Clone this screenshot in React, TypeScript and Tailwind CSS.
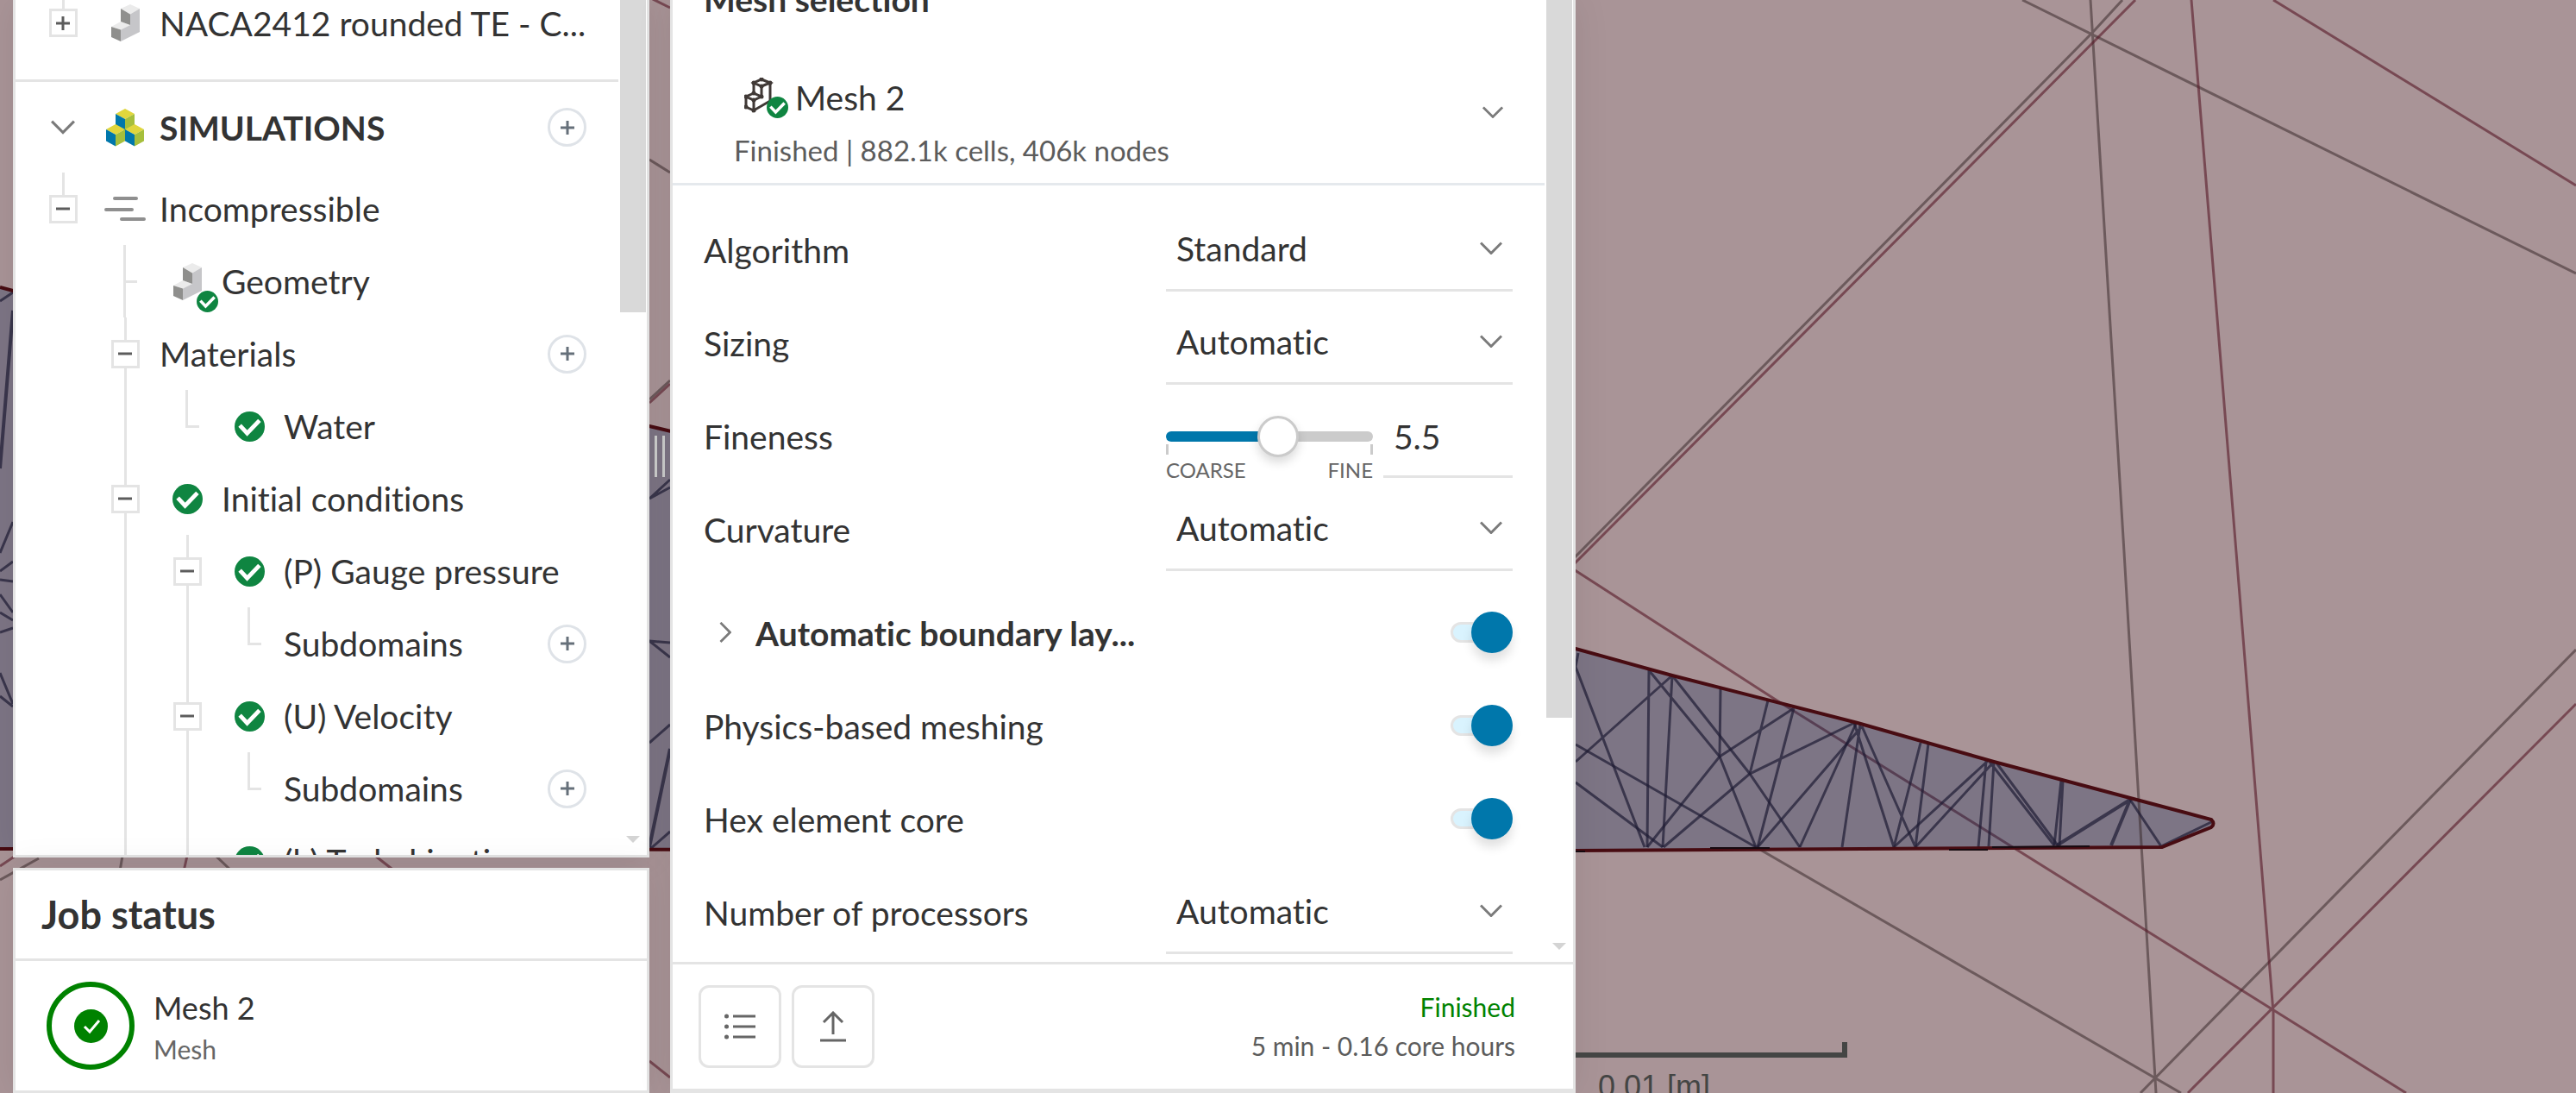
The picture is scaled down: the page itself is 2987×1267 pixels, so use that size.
import React from "react";
import clsx from "clsx";

type Guide = "blank" | "line" | "tee" | "elbow" | "first" | "node";

interface TreeItem {
  label: string;
  guides: Guide[];
  icon?: "flow" | "geometry" | "check";
  addable?: boolean;
}

const treeItems: TreeItem[] = [
  { label: "Incompressible", guides: ["first"], icon: "flow" },
  { label: "Geometry", guides: ["blank", "tee"], icon: "geometry" },
  { label: "Materials", guides: ["blank", "node"], addable: true },
  { label: "Water", guides: ["blank", "line", "elbow"], icon: "check" },
  { label: "Initial conditions", guides: ["blank", "node"], icon: "check" },
  {
    label: "(P) Gauge pressure",
    guides: ["blank", "line", "node"],
    icon: "check",
  },
  {
    label: "Subdomains",
    guides: ["blank", "line", "line", "elbow"],
    addable: true,
  },
  { label: "(U) Velocity", guides: ["blank", "line", "node"], icon: "check" },
  {
    label: "Subdomains",
    guides: ["blank", "line", "line", "elbow"],
    addable: true,
  },
  {
    label: "(k) Turb. kinetic energy",
    guides: ["blank", "line", "line"],
    icon: "check",
  },
];

const Chevron: React.FC<{ className?: string }> = ({ className }) => (
  <svg
    viewBox="0 0 26 15"
    className={className}
    fill="none"
    stroke="#7b7b7b"
    strokeWidth="3"
  >
    <path d="M1 1.5l12 12 12-12" />
  </svg>
);

const CheckBadge: React.FC<{ className?: string }> = ({ className }) => (
  <svg viewBox="0 0 36 36" className={className}>
    <circle cx="18" cy="18" r="18" fill="#0f8541" />
    <path
      d="M8 18.500l7 7.500 13-13.500"
      fill="none"
      stroke="#fff"
      strokeWidth="5"
      strokeLinecap="square"
    />
  </svg>
);

const GeometryIcon: React.FC = () => (
  <svg viewBox="0 0 33 43" className="h-[43px] w-[33px]">
    <path d="M22 0l11 5-11 6.500L11 5z" fill="#ebebeb" />
    <path d="M11 20l11 4-11 5.500L0 26z" fill="#ebebeb" />
    <path d="M11 5l11 6.500V24l-11-4z" fill="#8f8f8d" />
    <path d="M0 26l11 3.500V43L0 38z" fill="#8f8f8d" />
    <path d="M22 11.500L33 5v27L11 43V29.500L22 24z" fill="#c6c6c9" />
  </svg>
);

const cubes = [
  [22, 0],
  [11, 18],
  [33, 18],
];

const SimulationsIcon: React.FC = () => (
  <svg viewBox="0 0 44 44" className="h-11 w-11">
    {cubes.map(([x, y]) => (
      <g key={`${x}-${y}`}>
        <path
          d={`M${x} ${y}l11 6-11 6-11-6z`}
          fill="#e0d63d"
        />
        <path d={`M${x - 11} ${y + 6}l11 6v13.500l-11-6z`} fill="#0077ab" />
        <path d={`M${x + 11} ${y + 6}l-11 6v13.500l11-6z`} fill="#a6bf3c" />
      </g>
    ))}
  </svg>
);

const FlowIcon: React.FC = () => (
  <svg
    viewBox="0 0 48 30"
    className="h-[30px] w-12"
    stroke="#8f8f8f"
    strokeWidth="4"
    strokeLinecap="round"
  >
    <path d="M12 3h25M2 16h30M20 27h26" />
  </svg>
);

const meshJoints = [
  [20, 2],
  [11, 6],
  [30, 6],
  [20, 10],
  [11, 18],
  [2, 22],
  [20, 22],
  [11, 26],
  [2, 34],
  [11, 38],
];

const MeshIcon: React.FC = () => (
  <div className="relative h-[47px] w-[51px]">
    <svg viewBox="0 0 51 47" className="h-[47px] w-[51px]">
      <path
        d="M20 2l10 4-10 4-9-4zM11 6v12l9 4V10M30 6v21L11 38V26M11 18l-9 4 9 4 9-4M2 22v12l9 4"
        fill="none"
        stroke="#403936"
        strokeWidth="3"
      />
      {meshJoints.map(([x, y]) => (
        <circle key={`${x}-${y}`} cx={x} cy={y} r="2.500" fill="#403936" />
      ))}
    </svg>
    <CheckBadge className="absolute right-0 bottom-0 size-[25px]" />
  </div>
);

const ExpandBox: React.FC<{ open?: boolean }> = ({ open }) => (
  <button
    aria-label={open ? "Collapse" : "Expand"}
    className="flex size-[33px] shrink-0 items-center justify-center border-[3px] border-[#e4e4e4] bg-white"
  >
    <svg viewBox="0 0 16 16" className="size-4" stroke="#5c5c5c" strokeWidth="3">
      <path d={open ? "M0 8h16" : "M0 8h16M8 0v16"} />
    </svg>
  </button>
);

const AddButton: React.FC<{ label: string }> = ({ label }) => (
  <button
    aria-label={`Add to ${label}`}
    className="mr-[37px] flex size-[45px] shrink-0 items-center justify-center rounded-full border-[3px] border-[#dfe3e8]"
  >
    <svg viewBox="0 0 16 16" className="size-4" stroke="#66707a" strokeWidth="3">
      <path d="M0 8h16M8 0v16" />
    </svg>
  </button>
);

const GuideCell: React.FC<{ kind: Guide }> = ({ kind }) => {
  if (kind === "tee" || kind === "elbow") {
    return (
      <div className="flex w-[72px] shrink-0 flex-col self-stretch pl-[34px]">
        <div className="w-4 flex-1 border-b-[3px] border-l-[3px] border-[#e4e4e4]" />
        <div
          className={clsx(
            "w-4 flex-1 border-[#e4e4e4]",
            kind === "tee" && "border-l-[3px]",
          )}
        />
      </div>
    );
  }
  return (
    <div className="flex w-[72px] shrink-0 flex-col items-center self-stretch">
      <div
        className={clsx("w-[3px] flex-1", kind !== "blank" && "bg-[#e4e4e4]")}
      />
      {(kind === "first" || kind === "node") && (
        <ExpandBox open />
      )}
      <div
        className={clsx(
          "w-[3px] flex-1",
          (kind === "line" || kind === "node") && "bg-[#e4e4e4]",
        )}
      />
    </div>
  );
};

const TreeIcon: React.FC<{ icon: TreeItem["icon"] }> = ({ icon }) => (
  <div className="flex w-[72px] shrink-0 items-center justify-center">
    {icon === "flow" && <FlowIcon />}
    {icon === "check" && <CheckBadge className="size-[35px]" />}
    {icon === "geometry" && (
      <div className="relative">
        <GeometryIcon />
        <CheckBadge className="absolute -right-[19px] -bottom-[14px] size-[25px]" />
      </div>
    )}
  </div>
);

const Scrollbar: React.FC<{ thumb: string }> = ({ thumb }) => (
  <div className="flex w-[33px] shrink-0 flex-col items-center justify-between pb-3.5">
    <div className={clsx("w-[30px] bg-[#d9d9d9]", thumb)} />
    <svg viewBox="0 0 16 8" className="h-2 w-4" fill="#d4d4d4">
      <path d="M0 0h16L8 8z" />
    </svg>
  </div>
);

const TreePanel: React.FC = () => (
  <nav className="flex min-h-0 flex-1 overflow-hidden border-[3px] border-t-0 border-[#e4e4e4] bg-white shadow-[0_0_40px_rgba(0,0,0,0.08)]">
    <div className="min-w-0 flex-1">
      <div className="h-[95px] border-b-[3px] border-[#e4e4e4] pl-[19px]">
        <div className="flex h-[53px] items-center">
          <div className="flex w-[72px] shrink-0 flex-col items-center self-stretch">
            <div className="w-[3px] flex-1 bg-[#e4e4e4]" />
            <ExpandBox />
            <div className="flex-1" />
          </div>
          <div className="flex w-[72px] shrink-0 justify-center">
            <GeometryIcon />
          </div>
          <span className="ml-1 whitespace-nowrap">
            NACA2412 rounded TE - C...
          </span>
        </div>
      </div>
      <div className="flex h-[105px] items-center pl-[19px]">
        <button
          aria-label="Collapse simulations"
          className="flex w-[72px] shrink-0 justify-center"
        >
          <Chevron className="w-7" />
        </button>
        <div className="flex w-[72px] shrink-0 justify-center">
          <SimulationsIcon />
        </div>
        <h2 className="ml-1 flex-1 font-bold">SIMULATIONS</h2>
        <AddButton label="Simulations" />
      </div>
      <ul>
        {treeItems.map((item, i) => (
          <li key={i} className="flex h-[84px] items-center pl-[19px]">
            {item.guides.map((kind, g) => (
              <GuideCell key={g} kind={kind} />
            ))}
            {item.icon && <TreeIcon icon={item.icon} />}
            <span className="ml-1 flex-1 whitespace-nowrap">
              {item.label}
            </span>
            {item.addable && <AddButton label={item.label} />}
          </li>
        ))}
      </ul>
    </div>
    <Scrollbar thumb="h-[362px]" />
  </nav>
);

const JobStatus: React.FC = () => (
  <section className="border-[3px] border-[#e4e4e4] bg-white shadow-[0_0_40px_rgba(0,0,0,0.08)]">
    <h2 className="flex h-[105px] items-center border-b-[3px] border-[#e4e4e4] px-[30px] text-[45px] font-bold">
      Job status
    </h2>
    <div className="flex h-[150px] items-center gap-[22px] pl-9">
      <div className="flex size-[102px] items-center justify-center rounded-full border-[6px] border-[#008200]">
        <svg viewBox="0 0 39 39" className="size-[39px]">
          <circle cx="19.500" cy="19.500" r="19.500" fill="#008200" />
          <path
            d="M12 20l6 6 11-13"
            fill="none"
            stroke="#fff"
            strokeWidth="3"
          />
        </svg>
      </div>
      <div className="pt-1.5 leading-[48px]">
        <p className="text-[36px]">Mesh 2</p>
        <p className="text-[30px] text-[#666]">Mesh</p>
      </div>
    </div>
  </section>
);

const FieldRow: React.FC<{
  id: string;
  label: string;
  children: React.ReactNode;
}> = ({ id, label, children }) => (
  <div className="flex h-[108px] items-end pr-[37px] pl-9">
    <label htmlFor={id} className="flex h-[98px] flex-1 items-center pt-0.5">
      {label}
    </label>
    {children}
  </div>
);

const SelectField: React.FC<{ id: string; label: string; value: string }> = ({
  id,
  label,
  value,
}) => (
  <FieldRow id={id} label={label}>
    <div className="relative w-[402px]">
      <select
        id={id}
        className="h-[98px] w-full appearance-none border-b-[3px] border-[#e4e4e4] bg-transparent px-3 outline-none"
      >
        <option>{value}</option>
      </select>
      <Chevron className="pointer-events-none absolute top-10 right-3 w-[26px]" />
    </div>
  </FieldRow>
);

const Toggle: React.FC<{ id: string }> = ({ id }) => (
  <div className="flex h-[98px] items-center">
    <input
      id={id}
      type="checkbox"
      role="switch"
      defaultChecked
      className="flex h-6 w-[72px] appearance-none items-center rounded-full border-[3px] border-[#e4e4e4] bg-[#d9f3fe] before:size-12 before:shrink-0 before:rounded-full before:bg-[#0077ab] before:shadow-[0_9px_12px_rgba(0,0,0,0.12)] checked:before:-mr-[3px] checked:before:ml-auto"
    />
  </div>
);

const MeshPanel: React.FC = () => (
  <section className="flex h-screen min-w-0 flex-col border-x-[3px] border-b-[5px] border-[#e4e4e4] bg-white shadow-[0_0_40px_rgba(0,0,0,0.08)]">
    <div className="flex min-h-0 flex-1 overflow-hidden">
      <div className="min-w-0 flex-1">
        <div className="-mt-[25px] border-b-[3px] border-[#e5e9ed] pb-3.5">
          <h2 className="pl-9 leading-[48px] font-bold">Mesh selection</h2>
          <button className="mt-[60px] flex w-full items-start justify-between pr-12 pl-[71px] text-left">
            <span>
              <span className="flex h-[60px] items-center gap-2 pl-3">
                <MeshIcon />
                Mesh 2
              </span>
              <span className="mt-[7px] block text-[33px] leading-[48px] text-[#5c5c5c]">
                Finished | 882.1k cells, 406k nodes
              </span>
            </span>
            <Chevron className="mt-10 w-6" />
          </button>
        </div>
        <form className="pt-[15px]">
          <SelectField id="algorithm" label="Algorithm" value="Standard" />
          <SelectField id="sizing" label="Sizing" value="Automatic" />
          <FieldRow id="fineness" label="Fineness">
            <div className="flex w-[402px] gap-3">
              <div className="h-[98px] w-60 pt-[26px] text-[24px] leading-6 text-[#666]">
                <input
                  id="fineness"
                  type="range"
                  min="0"
                  max="10"
                  step="0.5"
                  defaultValue="5.5"
                  className="block h-12 w-full appearance-none bg-transparent [&::-webkit-slider-runnable-track]:h-3 [&::-webkit-slider-runnable-track]:rounded-full [&::-webkit-slider-runnable-track]:bg-[linear-gradient(to_right,#0077ab_55%,#cbcbcb_55%)] [&::-webkit-slider-thumb]:-mt-[18px] [&::-webkit-slider-thumb]:size-12 [&::-webkit-slider-thumb]:appearance-none [&::-webkit-slider-thumb]:rounded-full [&::-webkit-slider-thumb]:border-[3px] [&::-webkit-slider-thumb]:border-[#cbcbcb] [&::-webkit-slider-thumb]:bg-white [&::-webkit-slider-thumb]:shadow-[0_6px_12px_rgba(0,0,0,0.15)]"
                />
                <div className="-mt-[15px] h-3 border-x-[3px] border-[#cbcbcb]" />
                <div className="mt-1.5 flex justify-between">
                  <span>COARSE</span>
                  <span>FINE</span>
                </div>
              </div>
              <input
                type="text"
                aria-label="Fineness value"
                defaultValue="5.5"
                className="h-[98px] w-[150px] border-b-[3px] border-[#e4e4e4] bg-transparent px-3 pt-1 outline-none"
              />
            </div>
          </FieldRow>
          <SelectField id="curvature" label="Curvature" value="Automatic" />
          <div className="mt-3 flex h-[108px] items-end pr-[37px] pl-12">
            <button
              type="button"
              aria-label="Expand boundary layers"
              className="flex h-[98px] w-[26px] items-center justify-center"
            >
              <Chevron className="w-6 shrink-0 -rotate-90" />
            </button>
            <label
              htmlFor="layers"
              className="ml-[22px] flex h-[98px] flex-1 items-center pt-0.5 font-bold"
            >
              Automatic boundary lay...
            </label>
            <Toggle id="layers" />
          </div>
          <FieldRow id="physics" label="Physics-based meshing">
            <Toggle id="physics" />
          </FieldRow>
          <FieldRow id="hex" label="Hex element core">
            <Toggle id="hex" />
          </FieldRow>
          <SelectField
            id="processors"
            label="Number of processors"
            value="Automatic"
          />
        </form>
      </div>
      <Scrollbar thumb="h-[832px]" />
    </div>
    <footer className="flex items-center gap-3 border-t-[3px] border-[#e4e4e4] py-6 pr-[67px] pl-[30px]">
      <button
        aria-label="Event log"
        className="flex size-24 items-center justify-center rounded-xl border-[3px] border-[#e4e4e4]"
      >
        <svg viewBox="0 0 36 30" className="w-9" stroke="#666" strokeWidth="3">
          <path d="M10 3h26M10 15h26M10 27h26" />
          <path
            d="M2.500 3h.01M2.500 15h.01M2.500 27h.01"
            strokeWidth="5"
            strokeLinecap="round"
          />
        </svg>
      </button>
      <button
        aria-label="Export mesh"
        className="flex size-24 items-center justify-center rounded-xl border-[3px] border-[#e4e4e4]"
      >
        <svg
          viewBox="0 0 30 36"
          className="w-[30px]"
          fill="none"
          stroke="#666"
          strokeWidth="3"
        >
          <path d="M15 27V2M4 13L15 2l11 11M0 34h30" />
        </svg>
      </button>
      <div className="flex-1 text-right text-[30px] leading-[45px] text-[#5c5c5c]">
        <p className="text-[#008200]">Finished</p>
        <p>5 min - 0.16 core hours</p>
      </div>
    </footer>
  </section>
);

// Cut plane through the mesh: far-field edges first, then the airfoil section
const MeshCanvas: React.FC = () => (
  <svg
    viewBox="0 0 2987 1267"
    preserveAspectRatio="xMinYMin slice"
    className="absolute inset-0 h-full w-full"
    fill="none"
  >
    <path
      d="M0 333L15 337L753 494L1827 752L1939 783L2154 838L2312 883L2470 925L2564 950Q2569 955 2564 959L2507 982L1827 986L0 984z"
      fill="#7d7585"
    />
    <g stroke="#3b2a2c" strokeOpacity="0.55" strokeWidth="3">
      <path d="M2345 0L2987 317M2424 0L2463 640L2500 1267M2461 0L2427 37L1832 640L1820 652M2036 982L2529 1267M2987 753L2482 1267" />
      <path d="M753 185L777 200M0 1020L45 995M142 992L139 1010M250 992L269 1010M753 463L777 441" />
    </g>
    <g stroke="#561826" strokeOpacity="0.6" strokeWidth="3">
      <path d="M2636 0L2987 215M2541 0L2593 640L2636 1174V1267M2476 0L1839 640L1820 659M1820 657L2062 813M2337 984L2790 1267M2987 816L2537 1267" />
      <path d="M753 -3L777 9M753 467L777 445M0 1004L18 992M217 992L213 1010M435 992L458 1010M753 1230L777 1249" />
    </g>
    <path
      d="M2062 813L2337 984"
      stroke="#3d1a32"
      strokeOpacity="0.6"
      strokeWidth="3"
    />
    <g stroke="#1e1b33" strokeOpacity="0.7" strokeWidth="3">
      <path d="M1830 757L1827 773L1907 982M1912 777L1910 982M1939 783L1928 982M1912 777L1994 877L2036 982M1939 783L2029 897L2087 982M1939 783L1827 883" />
      <path d="M1995 798L1994 877L1910 982M2080 821L1994 877M2050 812L2029 897L1929 982M2080 821L2038 982M2150 838L2029 897M2152 839L2087 982" />
      <path d="M2159 842L2038 982M2157 840L2136 982M2150 838L2196 982M2159 842L2221 982M2227 861L2196 982M2236 862L2221 982" />
      <path d="M2305 882L2196 982M2312 883L2221 982M2303 882L2294 982M2312 883L2306 981M2307 883L2382 980M2314 883L2386 980" />
      <path d="M2390 905L2382 980M2392 905L2388 980M2470 927L2506 981L2564 953M1827 863L2036 982M1827 907L1928 982" />
      <path d="M753 578L777 556M753 578L777 565M753 743L777 745M753 743L777 762M753 861L777 840M753 985L777 964" />
      <path d="M0 349L15 339M0 641L15 605M0 662L15 651M0 672L15 674M0 689L15 710M0 710L15 719M0 733L15 728M0 780L15 816M0 807L15 819" />
      <path
        d="M2470 927L2385 980M2470 927L2448 980M753 982L777 868M0 543L15 360"
        strokeWidth="4"
      />
    </g>
    <path
      d="M0 333L15 337L753 494L1827 752L1939 783L2154 838L2312 883L2470 925L2564 950Q2569 955 2564 959L2507 982L1827 986L0 984"
      stroke="#480c12"
      strokeWidth="4"
    />
    <path
      d="M1983 983H2052M2260 985H2305M2310 982L2423 981M1820 987H1838"
      stroke="#160a10"
      strokeWidth="2"
    />
  </svg>
);

const App: React.FC = () => (
  <main className="relative h-screen overflow-hidden bg-[#a99497] font-['Lato',sans-serif] text-[39px] leading-[48px] text-[#333] [font-variant-ligatures:none]">
    <MeshCanvas />
    <div className="relative grid h-full grid-cols-[738fr_24px_1050fr_1160fr] pl-[15px]">
      <div className="flex h-screen min-w-0 flex-col gap-3">
        <TreePanel />
        <JobStatus />
      </div>
      <div className="flex cursor-col-resize justify-center gap-1.5 pt-[505px]">
        <div className="h-12 w-[3px] bg-[#c9cac9]" />
        <div className="h-12 w-[3px] bg-[#c9cac9]" />
      </div>
      <MeshPanel />
      <div className="flex flex-col items-start justify-end overflow-hidden font-['Liberation_Sans',sans-serif]">
        <div className="h-[18px] w-[315px] shrink-0 border-r-[6px] border-b-[6px] border-[#444544]" />
        <div className="h-[41px] shrink-0 pt-2.5 pl-[26px] text-[36px] text-[#444544]">
          0.01 [m]
        </div>
      </div>
    </div>
  </main>
);

export default App;
